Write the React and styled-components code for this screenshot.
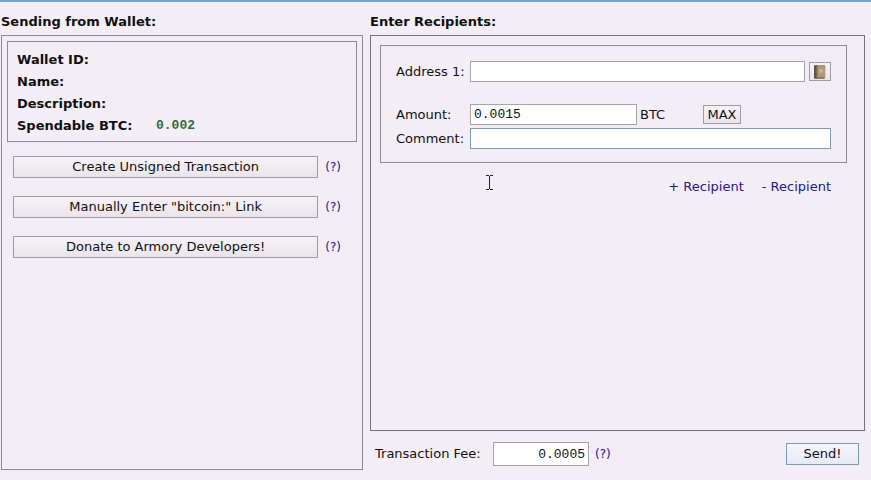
import React from 'react';
import styled, { createGlobalStyle } from 'styled-components';

const WALLET_INFO = [
  { label: 'Wallet ID:', value: '' },
  { label: 'Name:', value: '' },
  { label: 'Description:', value: '' },
  { label: 'Spendable BTC:', value: '0.002' },
];

const ACTIONS = [
  'Create Unsigned Transaction',
  'Manually Enter "bitcoin:" Link',
  'Donate to Armory Developers!',
];

export default function App() {
  return (
    <>
      <GlobalStyle />
      <S.Window>
        <S.WalletColumn>
          <S.Title>Sending from Wallet:</S.Title>
          <S.WalletPanel>
            <S.InfoFrame>
              {WALLET_INFO.map(({ label, value }) => (
                <S.InfoRow key={label}>
                  <S.InfoLabel>{label}</S.InfoLabel>
                  <S.InfoValue>{value}</S.InfoValue>
                </S.InfoRow>
              ))}
            </S.InfoFrame>
            <S.ActionList>
              {ACTIONS.map((action) => (
                <S.ActionRow key={action}>
                  <S.ActionButton type='button'>{action}</S.ActionButton>
                  <S.HelpLink href='#help'>(?)</S.HelpLink>
                </S.ActionRow>
              ))}
            </S.ActionList>
          </S.WalletPanel>
        </S.WalletColumn>

        <S.RecipientColumn>
          <S.Title>Enter Recipients:</S.Title>
          <S.RecipientPanel>
            <S.RecipientFrame>
              <S.Field $spaced>
                <S.Label htmlFor='address'>Address 1:</S.Label>
                <S.Input id='address' type='text' />
                <S.BookButton type='button' aria-label='Address book'>
                  <BookIcon />
                </S.BookButton>
              </S.Field>
              <S.Field>
                <S.Label htmlFor='amount'>Amount:</S.Label>
                <S.AmountInput id='amount' type='text' defaultValue='0.0015' />
                <S.Unit>BTC</S.Unit>
                <S.MaxButton type='button'>MAX</S.MaxButton>
              </S.Field>
              <S.Field>
                <S.Label htmlFor='comment'>Comment:</S.Label>
                <S.Input id='comment' type='text' $active />
              </S.Field>
            </S.RecipientFrame>
            <S.RecipientLinks>
              <S.Link href='#add'>+ Recipient</S.Link>
              <S.Link href='#remove'>- Recipient</S.Link>
            </S.RecipientLinks>
            <S.TextCursor viewBox='0 0 9 17' aria-hidden='true'>
              <path
                d='M1 1.5h3M5 1.5h3M4.5 2v13M1 15.5h3M5 15.5h3'
                stroke='#222'
                fill='none'
              />
            </S.TextCursor>
          </S.RecipientPanel>
          <S.Footer>
            <S.FeeLabel htmlFor='fee'>Transaction Fee:</S.FeeLabel>
            <S.FeeInput id='fee' type='text' defaultValue='0.0005' />
            <S.HelpLink href='#help'>(?)</S.HelpLink>
            <S.SendButton type='button'>Send!</S.SendButton>
          </S.Footer>
        </S.RecipientColumn>
      </S.Window>
    </>
  );
}

function BookIcon() {
  return (
    <svg width='14' height='16' viewBox='0 0 14 16' aria-hidden='true'>
      <path d='M1 1.5 3 1v14l-2-.8z' fill='#5d5347' />
      <path d='M3 1h9v13l-1 1H3z' fill='#b0987a' />
      <path d='M3 1h1.5v14H3z' fill='#7c6852' />
      <path d='M12 1.5h1V14l-1 .5z' fill='#d9cfc4' />
      <path d='M6 5h4v3.500H6z' fill='#c8b495' />
      <path d='M4.500 13h7v1.500h-7z' fill='#8a7359' />
    </svg>
  );
}

const GlobalStyle = createGlobalStyle`
  * {
    box-sizing: border-box;
  }

  body {
    margin: 0;
    background: #f3eef5;
    color: #111;
    font-family: 'DejaVu Sans', Verdana, sans-serif;
    font-size: 13px;
    line-height: 16px;
  }

  button,
  input {
    margin: 0;
    color: inherit;
    font: inherit;
  }
`;

const Button = styled.button`
  padding: 0;
  border: 1px solid #a09ca3;
  background: linear-gradient(#f6f2f7, #e9e5ea);
  white-space: nowrap;
`;

const Input = styled.input`
  flex: 1;
  min-width: 0;
  height: 21px;
  padding: 0 3px;
  border: 1px solid ${({ $active }) => ($active ? '#7d9bb5' : '#a6a3ab')};
  border-radius: 0;
  background: #fff;
  font-family: 'Liberation Mono', 'Courier New', monospace;
  outline: none;
`;

const Link = styled.a`
  color: #24188c;
  text-decoration: none;
`;

const S = {
  Window: styled.main`
    display: flex;
    gap: 7px;
    min-height: 100vh;
    padding: 12px 6px 10px 1px;
    border-top: 2px solid #74a0d2;
  `,
  WalletColumn: styled.section`
    display: flex;
    flex-direction: column;
    width: 362px;
  `,
  RecipientColumn: styled.section`
    display: flex;
    flex: 1;
    flex-direction: column;
    min-width: 0;
  `,
  Title: styled.h2`
    margin: 0 0 5px;
    font-size: 13px;
  `,
  WalletPanel: styled.div`
    flex: 1;
    padding: 5px;
    border: 1px solid #8f8a94;
  `,
  InfoFrame: styled.dl`
    margin: 0;
    padding: 7px 9px 4px;
    border: 1px solid #8f8a94;
  `,
  InfoRow: styled.div`
    display: flex;
    line-height: 22px;
  `,
  InfoLabel: styled.dt`
    width: 139px;
    font-weight: bold;
  `,
  InfoValue: styled.dd`
    margin: 0;
    color: #35693a;
    font-family: 'Liberation Mono', 'Courier New', monospace;
    font-weight: bold;
  `,
  ActionList: styled.div`
    display: flex;
    flex-direction: column;
    gap: 18px;
    padding: 14px 16px 0 6px;
  `,
  ActionRow: styled.div`
    display: flex;
    align-items: center;
    gap: 7px;
  `,
  ActionButton: styled(Button)`
    flex: 1;
    height: 22px;
  `,
  HelpLink: styled(Link)`
    font-size: 12px;
  `,
  RecipientPanel: styled.div`
    position: relative;
    flex: 1;
    padding: 9px 17px 9px 9px;
    border: 1px solid #77717d;
  `,
  RecipientFrame: styled.div`
    display: flex;
    flex-direction: column;
    gap: 3px;
    padding: 15px 15px 13px;
    border: 1px solid #8f8a94;
  `,
  Field: styled.div`
    display: flex;
    align-items: center;
    margin-bottom: ${({ $spaced }) => ($spaced ? '19px' : '0')};
  `,
  Label: styled.label`
    width: 74px;
    white-space: nowrap;
  `,
  Input,
  AmountInput: styled(Input)`
    flex: none;
    width: 167px;
  `,
  BookButton: styled(Button)`
    display: flex;
    align-items: center;
    justify-content: center;
    width: 22px;
    height: 19px;
    margin-left: 4px;
  `,
  Unit: styled.span`
    width: 63px;
    margin-left: 3px;
  `,
  MaxButton: styled(Button)`
    width: 38px;
    height: 19px;
    line-height: 17px;
  `,
  Link,
  RecipientLinks: styled.div`
    display: flex;
    justify-content: flex-end;
    gap: 18px;
    padding: 16px 16px 0 0;
  `,
  // mouse pointer resting on the panel
  TextCursor: styled.svg`
    position: absolute;
    top: 138px;
    left: 114px;
    width: 9px;
    height: 17px;
  `,
  Footer: styled.footer`
    display: flex;
    align-items: center;
    gap: 6px;
    padding: 11px 6px 4px 5px;
  `,
  FeeLabel: styled.label`
    width: 112px;
  `,
  FeeInput: styled(Input)`
    flex: none;
    width: 96px;
    height: 24px;
    text-align: right;
  `,
  SendButton: styled(Button)`
    width: 73px;
    height: 22px;
    margin-left: auto;
    border-color: #7d9bb5;
    background: linear-gradient(#f7f4fa, #e4ebf5);
  `,
};
